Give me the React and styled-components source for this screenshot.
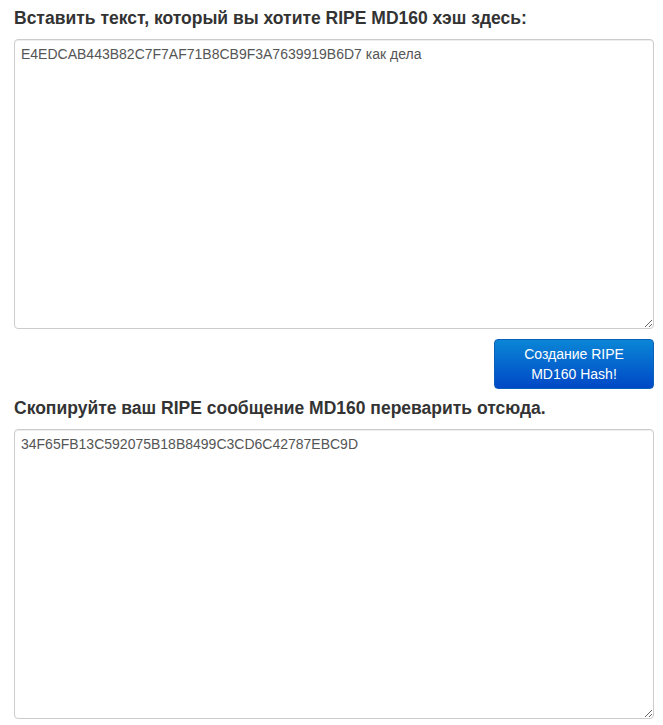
import React from "react";
import styled, { createGlobalStyle } from "styled-components";

const GlobalStyle = createGlobalStyle`
    body {
        margin: 0;
        background: #ffffff;
        font-family: "Liberation Sans", Arial, sans-serif;
        color: #333333;
    }
`;

export default function App() {
    return (
        <>
            <GlobalStyle />
            <Page>
                <Label>Вставить текст, который вы хотите RIPE MD160 хэш здесь:</Label>
                <TextBox defaultValue="E4EDCAB443B82C7F7AF71B8CB9F3A7639919B6D7 как дела" />
                <ButtonRow>
                    <HashButton>Создание RIPE<br />MD160 Hash!</HashButton>
                </ButtonRow>
                <Label>Скопируйте ваш RIPE сообщение MD160 переварить отсюда.</Label>
                <TextBox defaultValue="34F65FB13C592075B18B8499C3CD6C42787EBC9D" readOnly />
            </Page>
        </>
    );
}

const Page = styled.div`
    width: 640px;
    padding: 8px 0 0 14px;
    display: flex;
    flex-direction: column;
`;

const Label = styled.div`
    font-size: 17.5px;
    font-weight: bold;
    line-height: 20px;
    color: #333333;
    margin-bottom: 11px;
`;

const TextBox = styled.textarea`
    box-sizing: border-box;
    width: 640px;
    height: 290px;
    padding: 6px 6px;
    border: 1px solid #cccccc;
    border-radius: 4px;
    font-family: "Liberation Sans", Arial, sans-serif;
    font-size: 14px;
    line-height: 16px;
    color: #555555;
    box-shadow: inset 0 1px 1px rgba(0, 0, 0, 0.075);
    resize: both;
    outline: none;
`;

const ButtonRow = styled.div`
    display: flex;
    justify-content: flex-end;
    margin: 10px 0 9px;
`;

const HashButton = styled.button`
    width: 160px;
    height: 50px;
    border: 1px solid #0b5fb8;
    border-radius: 4px;
    background: linear-gradient(to bottom, #0a86d6, #0048c6);
    color: #ffffff;
    font-family: "Liberation Sans", Arial, sans-serif;
    font-size: 14px;
    line-height: 20px;
    padding: 0;
    cursor: pointer;
`;
